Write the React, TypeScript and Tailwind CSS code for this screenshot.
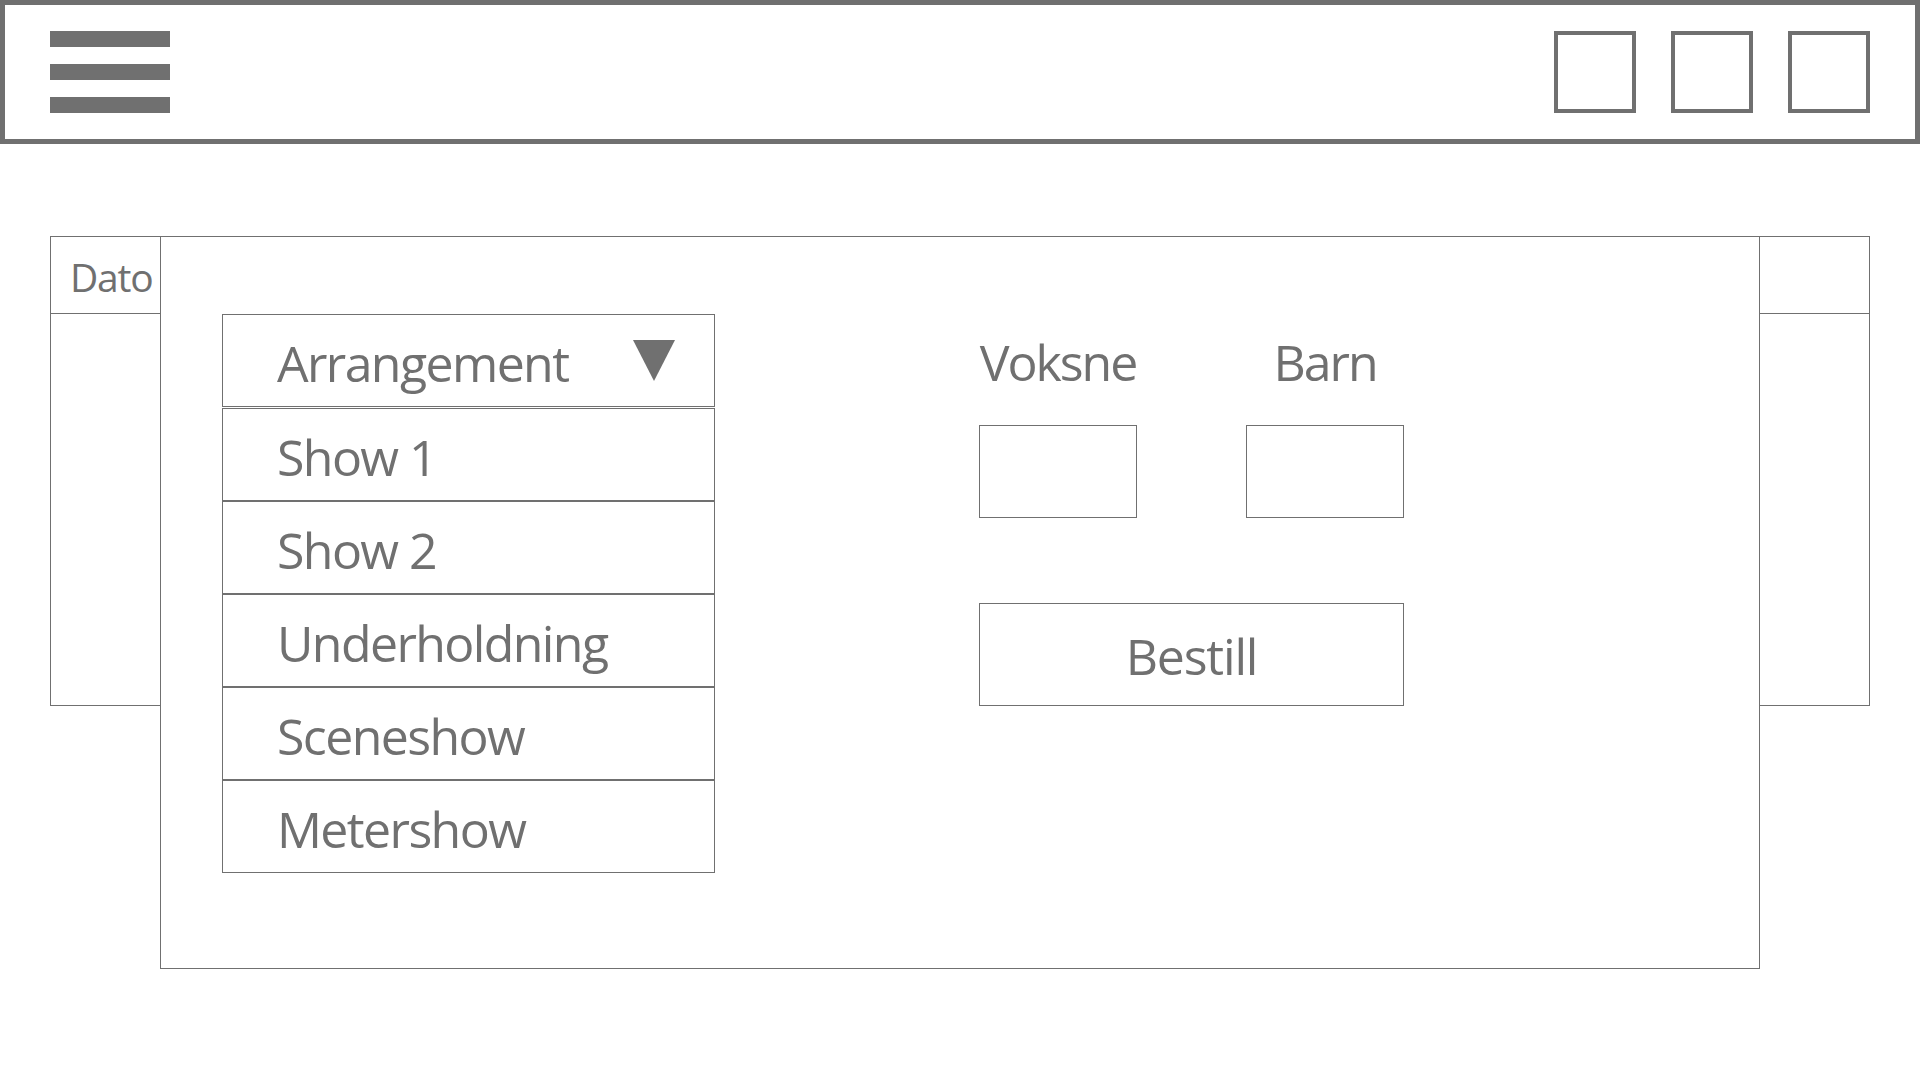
import React from "react";

const font = { fontFamily: '"Open Sans", "Noto Sans", sans-serif' };

function Item({ label, arrow = false }: { label: string; arrow?: boolean }) {
  return (
    <div className="h-[93px] border border-[#707070] flex items-center justify-between pl-[54px] pr-[39px]">
      <span className="text-[50px] leading-[50px] pt-[4px] text-[#707070] tracking-[-1.6px] whitespace-nowrap">{label}</span>
      {arrow && (
        <svg width="42" height="41" viewBox="0 0 42 41">
          <polygon points="0,0 42,0 21,41" fill="#707070" />
        </svg>
      )}
    </div>
  );
}

export default function App() {
  return (
    <div className="w-[1920px] h-[1080px] bg-white overflow-hidden" style={font}>
      <header className="h-[144px] border-[5px] border-[#707070] flex items-center justify-between pl-[45px] pr-[45px]">
        <div className="flex flex-col gap-[17px] w-[120px]">
          <div className="h-[16px] bg-[#707070]" />
          <div className="h-[16px] bg-[#707070]" />
          <div className="h-[16px] bg-[#707070]" />
        </div>
        <div className="flex gap-[35px]">
          <div className="w-[82px] h-[82px] border-[4px] border-[#707070]" />
          <div className="w-[82px] h-[82px] border-[4px] border-[#707070]" />
          <div className="w-[82px] h-[82px] border-[4px] border-[#707070]" />
        </div>
      </header>

      <main className="relative mx-[50px] mt-[92px]">
        <div className="h-[470px] border border-[#707070] grid grid-cols-[110px_1fr_111px] grid-rows-[77px_1fr]">
          <div className="border-r border-b border-[#707070] pl-[19px] pt-[20px]">
            <span className="text-[39px] leading-[39px] text-[#707070] tracking-[-1.2px]">Dato</span>
          </div>
          <div className="border-b border-[#707070]" />
          <div className="border-l border-b border-[#707070]" />
          <div className="border-r border-[#707070]" />
          <div />
          <div className="border-l border-[#707070]" />
        </div>

        <div className="absolute left-[110px] top-0 w-[1600px] h-[733px] bg-white border border-[#707070] flex pl-[61px] pt-[77px]">
          <div className="w-[493px] flex flex-col shrink-0">
            <Item label="Arrangement" arrow />
            <div className="h-[1px]" />
            <Item label="Show 1" />
            <Item label="Show 2" />
            <Item label="Underholdning" />
            <Item label="Sceneshow" />
            <Item label="Metershow" />
          </div>

          <div className="ml-[264px] flex flex-col">
            <div className="flex gap-[109px] pt-[23px]">
              <div className="w-[158px] flex flex-col items-center">
                <span className="text-[50px] leading-[50px] text-[#707070] tracking-[-2px] whitespace-nowrap">Voksne</span>
                <div className="mt-[38px] w-[158px] h-[93px] border border-[#707070]" />
              </div>
              <div className="w-[158px] flex flex-col items-center">
                <span className="text-[50px] leading-[50px] text-[#707070] tracking-[-2px] whitespace-nowrap">Barn</span>
                <div className="mt-[38px] w-[158px] h-[93px] border border-[#707070]" />
              </div>
            </div>
            <button className="mt-[85px] w-[425px] h-[103px] border border-[#707070] flex items-center justify-center bg-white">
              <span className="text-[50px] leading-[50px] pt-[2px] text-[#707070] tracking-[-1.2px]">Bestill</span>
            </button>
          </div>
        </div>
      </main>
    </div>
  );
}
